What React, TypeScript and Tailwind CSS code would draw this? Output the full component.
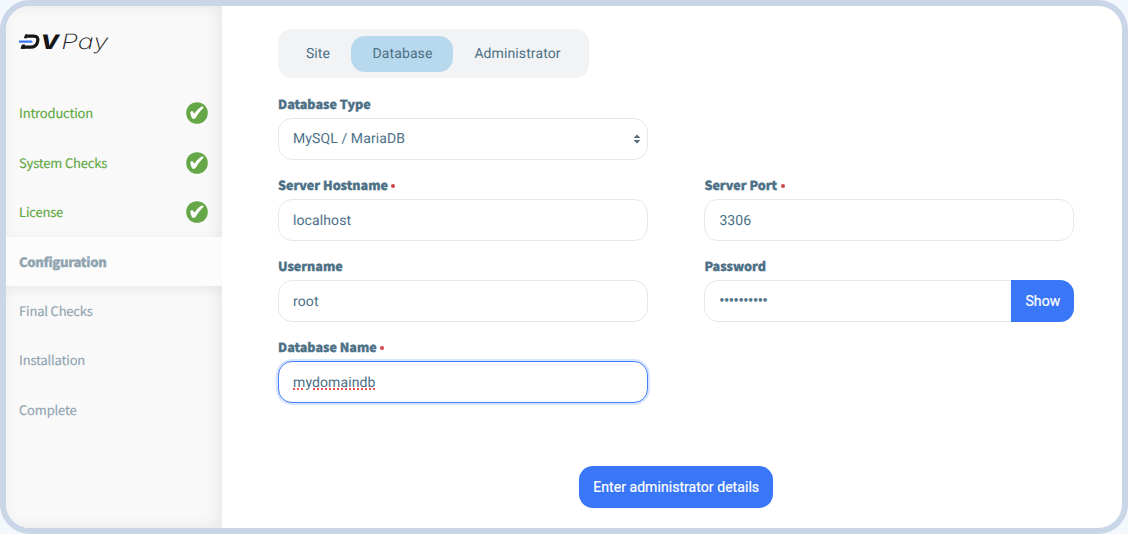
import type { ReactNode } from "react";

const LABEL_FONT = "font-['Noto_Sans_CJK_SC','Open_Sans',sans-serif]";

function Logo() {
  return (
    <svg width="92" height="28" viewBox="0 0 92 28" role="img" aria-label="DV Pay">
      <path d="M7.2 7.2H15.6Q20.9 7.2 19.6 12.6Q18.4 18.2 12.6 18.2H3.6" fill="none" stroke="#151515" strokeWidth="3.2" />
      <path d="M5.7 9.2 7.3 5.6H9V9.2ZM2.4 19.8 4.2 15.4H7V19.8Z" fill="#151515" />
      <path d="M1.8 12.7H13.4" stroke="#3a76f8" strokeWidth="2.3" strokeLinecap="round" />
      <text x="22.4" y="19.9" fontFamily="Inter, sans-serif" fontSize="20" fontWeight="800" fontStyle="italic" textLength="18.6" lengthAdjust="spacingAndGlyphs" fill="#151515">V</text>
      <text x="43.3" y="19.8" fontFamily="Inter, sans-serif" fontSize="21" fontWeight="200" fontStyle="italic" textLength="47" lengthAdjust="spacingAndGlyphs" fill="#222">Pay</text>
    </svg>
  );
}

function CheckBadge() {
  return (
    <svg width="22" height="22" viewBox="0 0 22 22" aria-hidden="true">
      <circle cx="11" cy="11" r="10.8" fill="#65a747" />
      <path d="M4.3 10.6C4.5 9.4 6.3 8.8 7.2 9.7L8.2 11.7C10 9 13 5.9 15.4 4.7C16.8 4.2 18 4.8 17.4 5.9C14.6 8.5 12.2 11.6 9.9 15.5C9 17.1 6.7 17.2 5.9 15.9C5 14.2 4.4 12.3 4.3 10.6Z" fill="#fff" />
    </svg>
  );
}

function Step({ name, state }: { name: string; state: "done" | "current" | "next" }) {
  const look = {
    done: "text-[#5fa83f] tracking-[-0.18px] [-webkit-text-stroke:0.15px_#5fa83f]",
    current: "bg-[#fcfcfd] font-black text-[#90a4b0] shadow-[0_3px_12px_rgba(0,0,0,0.07)] tracking-[-0.3px] [-webkit-text-stroke:0.3px_#90a4b0]",
    next: "text-[#90a4b0] tracking-[-0.18px] [-webkit-text-stroke:0.15px_#90a4b0]",
  }[state];
  return (
    <li className={`${LABEL_FONT} flex h-[49.4px] items-center justify-between pr-3.5 pl-[13px] text-[13px] ${look}`}>
      <span>{name}</span>
      {state === "done" && <CheckBadge />}
    </li>
  );
}

function Field({ label, required, children }: { label: string; required?: boolean; children: ReactNode }) {
  return (
    <div className="h-[81.2px]">
      <div className={`${LABEL_FONT} flex h-[26px] items-center pb-0.5 text-[12.5px] leading-5 font-black tracking-[0.02px] text-[#4c7086] [-webkit-text-stroke:0.35px_#4c7086]`}>
        {label}
        {required && <span className="mt-0.5 ml-[3.5px] size-1 rounded-full bg-[#d0454c]" />}
      </div>
      {children}
    </div>
  );
}

const BOX = "flex h-[42px] w-full items-center rounded-[14px] border bg-white pt-0.5 pl-3.5";

function Box({ children }: { children: ReactNode }) {
  return <div className={`${BOX} border-[#dfe9ef]`}>{children}</div>;
}

export default function App() {
  return (
    <div className="h-[534px] w-[1128px] bg-[#f3f8fc] font-[Roboto,sans-serif] text-[14px] tracking-[0.1px] text-[#4c7086] [text-rendering:geometricPrecision]">
      <div className="flex h-full overflow-hidden rounded-[30px] border-[6px] border-[#c9d6e7] bg-white">
        <aside className="w-[216px] shrink-0 overflow-hidden bg-[#f9f9f9] shadow-[inset_-1px_0_0_#ececec,inset_-3px_0_16px_rgba(0,0,0,0.08)]">
          <div className="h-[82.5px] pt-[23px] pl-3">
            <Logo />
          </div>
          <ul>
            <Step name="Introduction" state="done" />
            <Step name="System Checks" state="done" />
            <Step name="License" state="done" />
            <Step name="Configuration" state="current" />
            <Step name="Final Checks" state="next" />
            <Step name="Installation" state="next" />
            <Step name="Complete" state="next" />
          </ul>
        </aside>

        <main className="flex flex-1 flex-col pt-[23px] pr-[48px] pl-14">
          <nav className="flex h-[49px] w-[311px] items-center rounded-[14px] bg-[#f2f3f5] px-[7px]">
            <span className="w-[66px] pt-0.5 text-center">Site</span>
            <span className="flex h-9 w-[102px] items-center justify-center rounded-[14px] bg-[#b8d9ed] pt-0.5 pl-px">Database</span>
            <span className="w-[129px] pt-0.5 text-center">Administrator</span>
          </nav>

          <form className="mt-[13.9px] grid grid-cols-[370px_370px] gap-x-[56.4px]">
            <Field label="Database Type">
              <Box>
                <span className="flex-1">MySQL / MariaDB</span>
                <svg className="mr-1.5 mb-0.5" width="8" height="10" viewBox="0 0 8 10" fill="#566b7c" aria-hidden="true">
                  <path d="M4 0.4 7.4 4H0.6ZM4 9.6 7.4 6H0.6Z" />
                </svg>
              </Box>
            </Field>
            <div />
            <Field label="Server Hostname" required>
              <Box>localhost</Box>
            </Field>
            <Field label="Server Port" required>
              <Box>3306</Box>
            </Field>
            <Field label="Username">
              <Box>root</Box>
            </Field>
            <Field label="Password">
              <div className="flex h-[42px] overflow-hidden rounded-[14px]">
                <div className="flex flex-1 items-center rounded-l-[14px] border border-r-0 border-[#dfe9ef] pt-px pl-3.5">
                  <span className="[-webkit-text-stroke:0.5px_#4c7086]">••••••••••</span>
                </div>
                <button type="button" className="w-[63px] bg-[#3a76f8] text-white [-webkit-text-stroke:0.2px_#fff]">Show</button>
              </div>
            </Field>
            <Field label="Database Name" required>
              <div className={`${BOX} border-[#4480f8] shadow-[0_0_0_2px_#d8e4fe]`}>
                <span className="underline decoration-[#e8544f] decoration-dotted decoration-[1.5px] underline-offset-[2px]">mydomaindb</span>
              </div>
            </Field>
          </form>

          <button type="button" className="mt-[49.2px] h-[42.5px] w-[194px] self-center rounded-[14px] bg-[#3a76f8] pt-px tracking-[0.06px] text-white [-webkit-text-stroke:0.2px_#fff]">
            Enter administrator details
          </button>
        </main>
      </div>
    </div>
  );
}
